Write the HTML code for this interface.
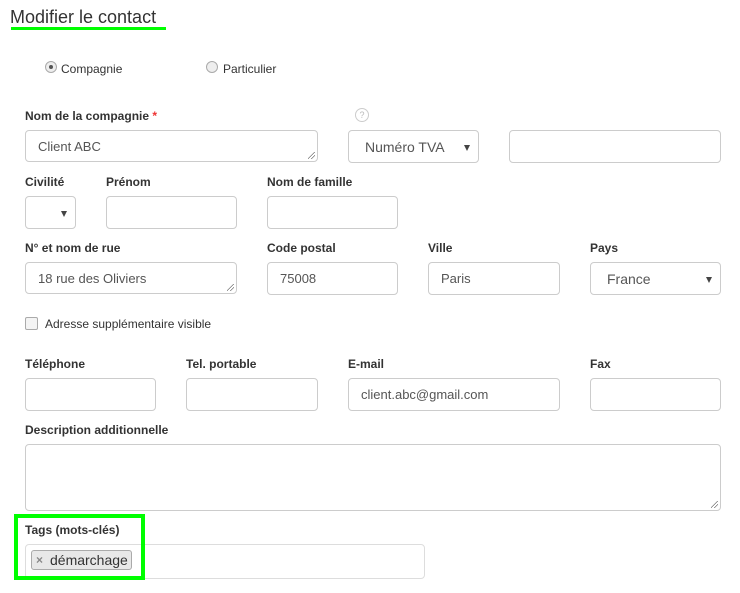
<!DOCTYPE html>
<html><head><meta charset="utf-8"><style>
body{margin:0;width:740px;height:593px;background:#fff;font-family:"Liberation Sans",Arial,sans-serif;color:#333;position:relative;overflow:hidden}
.a{position:absolute}
.l{position:absolute;font-size:12px;font-weight:bold;color:#333}
.i{position:absolute;box-sizing:border-box;border:1px solid #ccc;border-radius:4px;background:#fff;font-size:13px;color:#555;padding-left:12px;display:flex;align-items:center}
.s{font-size:14px;padding-left:16px}
.s:after{content:"";position:absolute;right:8px;top:50%;margin-top:-2px;border-left:3.5px solid transparent;border-right:3.5px solid transparent;border-top:6px solid #444}
.r:before{content:"";position:absolute;right:2px;bottom:2px;width:7px;height:7px;background:linear-gradient(135deg,transparent 45%,#777 45%,#777 52%,transparent 52%,transparent 70%,#777 70%,#777 77%,transparent 77%)}
.t{font-size:12px;color:#333}
</style></head><body>
<div class="a" style="left:10px;top:7px;font-size:18px;color:#333">Modifier le contact</div>
<div class="a" style="left:11px;top:27px;width:155px;height:3px;background:#00ff00"></div>

<div class="a" style="left:45px;top:61px;width:10px;height:10px;border-radius:50%;border:1px solid #aaa;background:#eee"></div>
<div class="a" style="left:49px;top:65px;width:4px;height:4px;border-radius:50%;background:#555"></div>
<div class="a t" style="left:61px;top:62px">Compagnie</div>
<div class="a" style="left:206px;top:61px;width:10px;height:10px;border-radius:50%;border:1px solid #aaa;background:#eee"></div>
<div class="a t" style="left:223px;top:62px">Particulier</div>

<div class="l" style="left:25px;top:109px">Nom de la compagnie <span style="color:#e33">*</span></div>
<div class="a" style="left:355px;top:108px;width:12px;height:12px;border:1px solid #ccc;border-radius:50%;font-size:9px;color:#bbb;text-align:center;line-height:12px">?</div>
<div class="i r" style="left:25px;top:130px;width:293px;height:32px">Client ABC</div>
<div class="i s" style="left:348px;top:130px;width:131px;height:33px">Numéro TVA</div>
<div class="i" style="left:509px;top:130px;width:212px;height:33px"></div>

<div class="l" style="left:25px;top:175px">Civilité</div>
<div class="l" style="left:106px;top:175px">Prénom</div>
<div class="l" style="left:267px;top:175px">Nom de famille</div>
<div class="i s" style="left:25px;top:196px;width:51px;height:33px"></div>
<div class="i" style="left:106px;top:196px;width:131px;height:33px"></div>
<div class="i" style="left:267px;top:196px;width:131px;height:33px"></div>

<div class="l" style="left:25px;top:241px">N° et nom de rue</div>
<div class="l" style="left:267px;top:241px">Code postal</div>
<div class="l" style="left:428px;top:241px">Ville</div>
<div class="l" style="left:590px;top:241px">Pays</div>
<div class="i r" style="left:25px;top:262px;width:212px;height:32px">18 rue des Oliviers</div>
<div class="i" style="left:267px;top:262px;width:131px;height:33px">75008</div>
<div class="i" style="left:428px;top:262px;width:132px;height:33px">Paris</div>
<div class="i s" style="left:590px;top:262px;width:131px;height:33px">France</div>

<div class="a" style="left:25px;top:317px;width:11px;height:11px;border:1px solid #aaa;border-radius:2px;background:#f4f4f4"></div>
<div class="a t" style="left:45px;top:317px">Adresse supplémentaire visible</div>

<div class="l" style="left:25px;top:357px">Téléphone</div>
<div class="l" style="left:186px;top:357px">Tel. portable</div>
<div class="l" style="left:348px;top:357px">E-mail</div>
<div class="l" style="left:590px;top:357px">Fax</div>
<div class="i" style="left:25px;top:378px;width:131px;height:33px"></div>
<div class="i" style="left:186px;top:378px;width:132px;height:33px"></div>
<div class="i" style="left:348px;top:378px;width:212px;height:33px">client.abc@gmail.com</div>
<div class="i" style="left:590px;top:378px;width:131px;height:33px"></div>

<div class="l" style="left:25px;top:423px">Description additionnelle</div>
<div class="i r" style="left:25px;top:444px;width:696px;height:67px"></div>

<div class="l" style="left:25px;top:523px">Tags (mots-clés)</div>
<div class="i" style="left:25px;top:544px;width:400px;height:35px;border-color:#ddd"></div>
<div class="a" style="left:31px;top:550px;width:101px;height:20px;box-sizing:border-box;border:1px solid #aaa;border-radius:3px;background:#e8e8e8;font-size:14px;color:#333;line-height:18px;padding-left:18px">démarchage</div>
<div class="a" style="left:36px;top:553px;font-size:12px;font-weight:bold;color:#888">×</div>
<div class="a" style="left:14px;top:514px;width:131px;height:66px;box-sizing:border-box;border:4px solid #00ff00"></div>
</body></html>
